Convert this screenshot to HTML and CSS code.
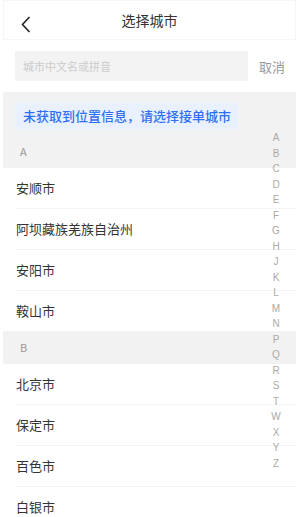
FILE: index.html
```html
<!DOCTYPE html>
<html lang="zh-CN">
<head>
  <meta charset="UTF-8" />
  <meta name="viewport" content="width=device-width, initial-scale=1.0"/>
  <title>选择城市</title>
  <link rel="stylesheet" href="styles.css">
</head>
<body>
  <div class="page">
    <div class="header">
      <span class="back">
        <svg width="10" height="17" viewBox="0 0 10 17"><path d="M8.5 1 L1.5 8.5 L8.5 16" fill="none" stroke="#222" stroke-width="1.6"/></svg>
      </span>
      <span class="title">选择城市</span>
    </div>

    <div class="search">
      <div class="search-box">城市中文名或拼音</div>
      <span class="cancel">取消</span>
    </div>

    <div class="top-group">
      <div class="notice">未获取到位置信息，请选择接单城市</div>
      <div class="letter">A</div>
    </div>
    <div class="rows">
      <div class="row">安顺市</div>
      <div class="row">阿坝藏族羌族自治州</div>
      <div class="row">安阳市</div>
      <div class="row">鞍山市</div>
    </div>

    <div class="letter-head">B</div>
    <div class="rows">
      <div class="row">北京市</div>
      <div class="row">保定市</div>
      <div class="row">百色市</div>
      <div class="row">白银市</div>
    </div>

    <!-- Index -->
    <div class="index">
      <span>A</span><span>B</span><span>C</span><span>D</span><span>E</span><span>F</span>
      <span>G</span><span>H</span><span>J</span><span>K</span><span>L</span><span>M</span>
      <span>N</span><span>P</span><span>Q</span><span>R</span><span>S</span><span>T</span>
      <span>W</span><span>X</span><span>Y</span><span>Z</span>
    </div>
  </div>
</body>
</html>
```

FILE: styles.css
```css
body {
  margin: 0;
  font-family: "Noto Sans CJK SC", "Noto Sans", sans-serif;
  background: #fff;
  overflow: hidden;
}

.page {
  position: relative;
  width: 293px;
  margin-left: 3px;
}

.header {
  height: 40px;
  box-sizing: border-box;
  border: 1px solid #f6f6f6;
  display: flex;
  align-items: center;
  justify-content: center;
  position: relative;
}

.back {
  position: absolute;
  left: 17px;
  top: 15px;
  line-height: 0;
}

.title {
  font-size: 14px;
  color: #333;
}

.search {
  display: flex;
  align-items: center;
  margin-top: 11px;
  padding-left: 12px;
}

.search-box {
  width: 233px;
  height: 30px;
  box-sizing: border-box;
  background: #f3f3f3;
  padding-left: 8px;
  font-size: 11px;
  line-height: 30px;
  color: #ccc;
}

.cancel {
  margin-left: 11px;
  font-size: 13px;
  color: #999;
}

.top-group {
  margin-top: 11px;
  background: #f2f2f2;
  padding-top: 10px;
}

.notice {
  display: inline-block;
  margin-left: 12px;
  padding: 0 7px 0 8px;
  height: 26px;
  line-height: 26px;
  background: #eaf1fe;
  color: #2e6ff3;
  font-size: 13px;
  font-weight: 500;
}

.letter,
.letter-head {
  height: 33px;
  line-height: 33px;
  padding-left: 17px;
  font-size: 11px;
  color: #999;
  background: #f2f2f2;
}

.letter {
  margin-top: 6px;
}

.rows {
  padding-left: 12px;
}

.row {
  height: 40px;
  line-height: 40px;
  padding-left: 1px;
  font-size: 13px;
  color: #333;
  border-bottom: 1px solid #f4f4f4;
}

.row:last-child {
  border-bottom: none;
}

.index {
  position: absolute;
  top: 130px;
  right: 12px;
  width: 16px;
  display: flex;
  flex-direction: column;
  align-items: center;
}

.index span {
  height: 15.5px;
  line-height: 15.5px;
  font-family: "Liberation Sans", Arial, sans-serif;
  font-size: 10px;
  color: #aaa;
}
```
